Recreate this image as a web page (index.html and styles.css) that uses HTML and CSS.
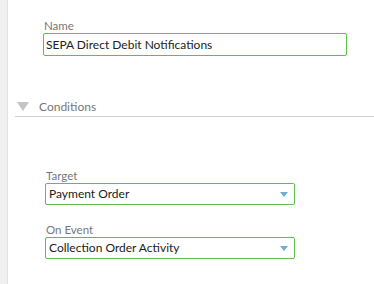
FILE: index.html
```html
<!DOCTYPE html>
<html>
<head>
<meta charset="utf-8">
<link rel="stylesheet" href="styles.css">
</head>
<body>
<div class="page">
  <div class="rail"></div>
  <div class="main">
    <div class="name-field">
      <label class="label">Name</label>
      <div class="input">SEPA Direct Debit Notifications</div>
    </div>
    <div class="section-head">
      <span class="caret"></span>
      <span class="section-title">Conditions</span>
    </div>
    <div class="conditions">
      <div class="field">
        <label class="label">Target</label>
        <div class="select"><span>Payment Order</span><span class="arrow"></span></div>
      </div>
      <div class="field">
        <label class="label">On Event</label>
        <div class="select"><span>Collection Order Activity</span><span class="arrow"></span></div>
      </div>
    </div>
  </div>
</div>
</body>
</html>
```

FILE: styles.css
```css
html, body {
  margin: 0;
  padding: 0;
  background: #fff;
  font-family: Lato, "Open Sans", sans-serif;
}
.page {
  display: flex;
  height: 284px;
  width: 374px;
  overflow: hidden;
}
.rail {
  width: 7px;
  flex: none;
  background: #f0f0f0;
  border-right: 1px solid #e2e2e2;
}
.main {
  flex: 1;
  display: flex;
  flex-direction: column;
}
.label {
  display: block;
  font-size: 11.5px;
  line-height: 14px;
  color: #777;
  padding-left: 1px;
}
.name-field {
  padding: 19px 0 0 35px;
}
.input {
  box-sizing: border-box;
  width: 304px;
  height: 23px;
  border: 1px solid #5bbf4a;
  border-radius: 2px;
  font-size: 12px;
  line-height: 21px;
  padding-left: 2px;
  color: #222;
}
.section-head {
  margin: 39px 0 0 7px;
  height: 21px;
  border-bottom: 1px solid #cfcfcf;
  display: flex;
  align-items: flex-start;
}
.caret {
  width: 0;
  height: 0;
  margin: 7px 0 0 2px;
  border-left: 6px solid transparent;
  border-right: 6px solid transparent;
  border-top: 9px solid #c4c4c4;
}
.section-title {
  margin-left: 10px;
  font-size: 12px;
  line-height: 18px;
  margin-top: 3px;
  color: #777;
}
.conditions {
  padding: 52px 0 0 37px;
  display: flex;
  flex-direction: column;
  gap: 18px;
}
.select {
  box-sizing: border-box;
  width: 250px;
  height: 22px;
  border: 1px solid #5bbf4a;
  border-radius: 2px;
  font-size: 12px;
  line-height: 20px;
  padding: 0 6px 0 3px;
  color: #222;
  display: flex;
  justify-content: space-between;
  align-items: center;
}
.arrow {
  width: 0;
  height: 0;
  border-left: 4.5px solid transparent;
  border-right: 4.5px solid transparent;
  border-top: 5px solid #6aafdc;
  margin-top: 1px;
}
```
